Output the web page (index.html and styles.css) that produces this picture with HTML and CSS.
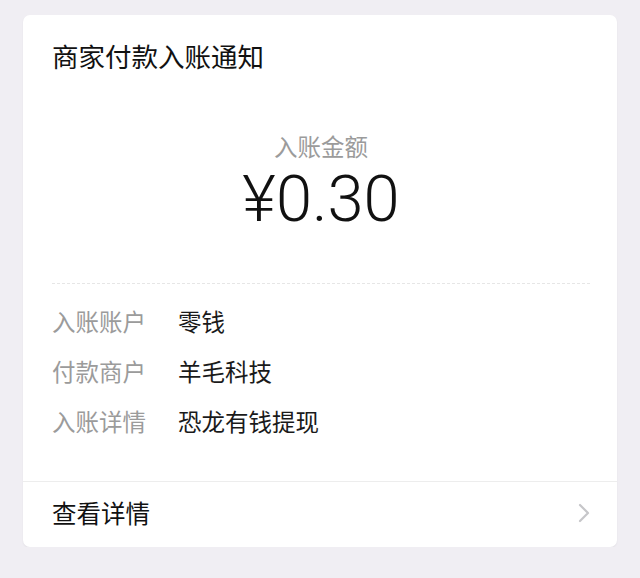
FILE: index.html
```html
<!DOCTYPE html>
<html lang="zh-CN">
<head>
    <meta charset="UTF-8">
    <meta name="viewport" content="width=device-width, initial-scale=1.0">
    <title>商家付款入账通知</title>
    <link rel="stylesheet" href="styles.css">
</head>
<body>
    <div class="card">
        <div class="card-title">商家付款入账通知</div>

        <div class="amount-box">
            <div class="amount-label">入账金额</div>
            <div class="amount">¥0.30</div>
        </div>

        <div class="details">
            <div class="row">
                <span class="row-label">入账账户</span>
                <span class="row-value">零钱</span>
            </div>
            <div class="row">
                <span class="row-label">付款商户</span>
                <span class="row-value">羊毛科技</span>
            </div>
            <div class="row">
                <span class="row-label">入账详情</span>
                <span class="row-value">恐龙有钱提现</span>
            </div>
        </div>

        <div class="card-footer">
            <span>查看详情</span>
            <svg class="chevron" width="14" height="22" viewBox="0 0 14 22">
                <polyline points="3,3 11,11 3,19" fill="none" stroke="#c6c6c9" stroke-width="2.2" stroke-linecap="round" stroke-linejoin="round"/>
            </svg>
        </div>
    </div>
</body>
</html>
```

FILE: styles.css
```css
/* notification card */
body {
    margin: 0;
    padding: 15px 23px 0 23px;
    background-color: #f0eef3;
    font-family: "Noto Sans CJK SC", "Noto Sans", sans-serif;
    color: #111;
}

.card {
    background-color: #ffffff;
    border-radius: 7px;
    box-shadow: 0 1px 2px rgba(0, 0, 0, 0.06);
    overflow: hidden;
}

.card-title {
    padding: 26px 29px 2px 29px;
    font-size: 26.5px;
    line-height: 30px;
}

.amount-box {
    margin: 0 27px 0 29px;
    padding: 58px 0 45px 0;
    text-align: center;
    border-bottom: 1px dashed #e6e6e6;
}

.amount-label {
    font-size: 23.5px;
    line-height: 30px;
    color: #9b9b9b;
}

.amount {
    font-family: Roboto, "Liberation Sans", sans-serif;
    font-weight: 300;
    font-size: 65px;
    line-height: 77px;
    color: #111;
}

.details {
    padding: 12px 29px 35px 29px;
}

.row {
    display: flex;
    height: 50px;
    align-items: center;
    font-size: 23.5px;
}

.row-label {
    width: 126px;
    color: #9b9b9b;
}

.row-value {
    color: #1a1a1a;
}

.card-footer {
    display: flex;
    align-items: center;
    justify-content: space-between;
    height: 61px;
    padding: 0 26px 4px 29px;
    border-top: 1px solid #ededed;
    font-size: 24.5px;
}

.chevron {
    display: block;
}
```
